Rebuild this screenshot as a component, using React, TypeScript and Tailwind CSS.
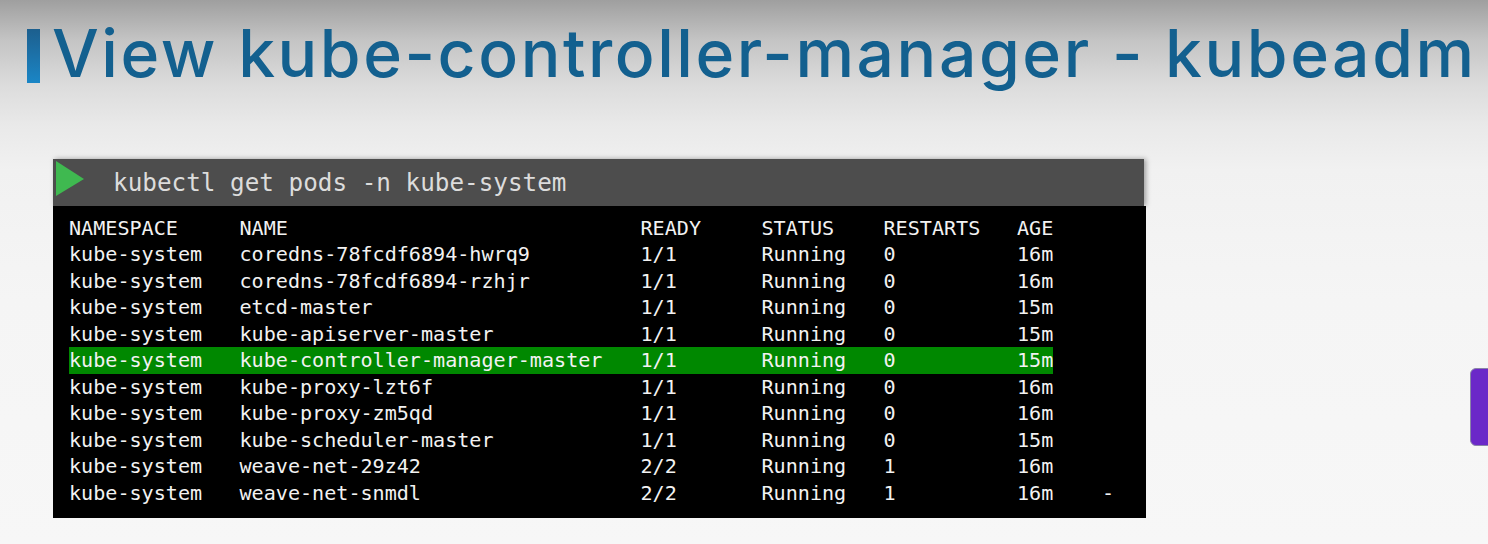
const rows = [
  ["kube-system", "coredns-78fcdf6894-hwrq9", "1/1", "Running", "0", "16m"],
  ["kube-system", "coredns-78fcdf6894-rzhjr", "1/1", "Running", "0", "16m"],
  ["kube-system", "etcd-master", "1/1", "Running", "0", "15m"],
  ["kube-system", "kube-apiserver-master", "1/1", "Running", "0", "15m"],
  ["kube-system", "kube-controller-manager-master", "1/1", "Running", "0", "15m"],
  ["kube-system", "kube-proxy-lzt6f", "1/1", "Running", "0", "16m"],
  ["kube-system", "kube-proxy-zm5qd", "1/1", "Running", "0", "16m"],
  ["kube-system", "kube-scheduler-master", "1/1", "Running", "0", "15m"],
  ["kube-system", "weave-net-29z42", "2/2", "Running", "1", "16m"],
  ["kube-system", "weave-net-snmdl", "2/2", "Running", "1", "16m"],
];

function Row({ cells, highlight }: { cells: string[]; highlight?: boolean }) {
  return (
    <div
      className={`grid grid-cols-[170.5px_401px_121px_122px_133.5px_36px] w-[984px] h-[26.5px] items-center leading-[26.5px] whitespace-pre ${
        highlight ? "bg-[#008800]" : ""
      }`}
    >
      {cells.map((c, i) => (
        <span key={i}>{c}</span>
      ))}
    </div>
  );
}

export default function App() {
  return (
    <div className="relative w-[1488px] h-[544px] overflow-hidden bg-[linear-gradient(to_bottom,#9f9f9f_0px,#c4c4c4_40px,#dcdcdc_85px,#e9e9e9_125px,#f1f1f1_170px,#f5f5f5_300px,#f7f7f7_544px)]">
      <div className="h-[140px] pl-[27px] pt-[29px]">
        <div className="flex items-start gap-[12px]">
          <div className="shrink-0 w-[13px] h-[54px] bg-gradient-to-b from-[#1c5f8e] to-[#1a86c6]" />
          <h1 className="shrink-0 text-[#13608f] text-[66px] leading-[48px] font-medium tracking-[2.55px] whitespace-pre font-['Inter','Noto_Sans',sans-serif]">
            View kube-controller-manager - kubeadm
          </h1>
        </div>
      </div>
      <div className="ml-[53px] mt-[19px] w-[1093px]">
        <div className="relative w-[1091px] h-[47px] bg-[#4d4d4d] shadow-[2px_0_5px_rgba(0,0,0,0.35)] flex items-center pl-[60px] pt-[2px] text-[#dcdcdc] text-[24.3px] font-['DejaVu_Sans_Mono',monospace]">
          <svg className="absolute left-[3px] top-[2px]" width="28" height="35" viewBox="0 0 28 35">
            <polygon points="0,0 28,18 0,35" fill="#3fb950" />
          </svg>
          <span>kubectl get pods -n kube-system</span>
        </div>
        <div className="relative h-[312px] bg-black pl-[16px] pt-[8.5px] text-[#f2f2f2] text-[20.1px] font-['DejaVu_Sans_Mono',monospace]">
          <Row cells={["NAMESPACE", "NAME", "READY", "STATUS", "RESTARTS", "AGE"]} />
          {rows.map((r, i) => (
            <Row key={i} cells={r} highlight={i === 4} />
          ))}
          <span className="absolute left-[1049px] top-[274px] leading-[26.5px]">-</span>
        </div>
      </div>
      <div className="absolute left-[1470px] top-[368px] w-[30px] h-[78px] rounded-[6px] bg-[#6b28c8] border border-[#8a84a8]" />
    </div>
  );
}
